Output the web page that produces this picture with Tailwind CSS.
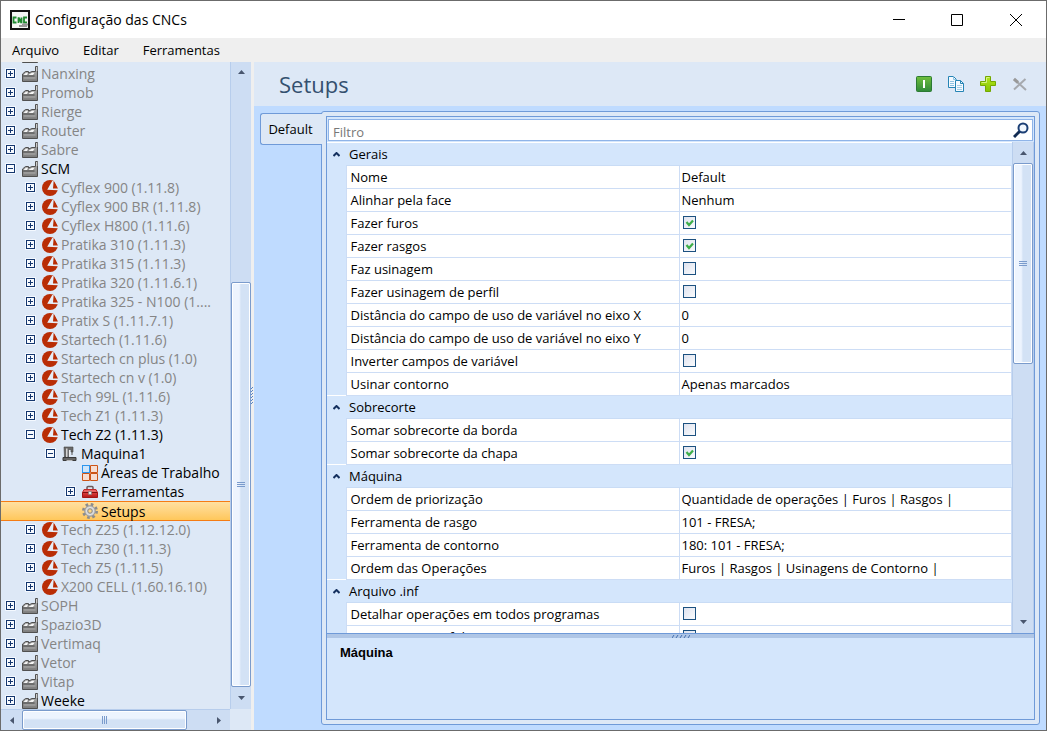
<!DOCTYPE html>
<html lang="pt-BR">
<head>
<meta charset="utf-8">
<title>Configuração das CNCs</title>
<script src="https://cdn.jsdelivr.net/npm/@tailwindcss/browser@4"></script>
</head>
<body class="font-['Open_Sans','Noto_Sans',sans-serif] text-black">
<svg class="absolute size-0" aria-hidden="true">
  <defs>
    <linearGradient id="metal" x2="0" y2="1"><stop stop-color="#b5b5b5"/><stop offset="1" stop-color="#7c7c7c"/></linearGradient>
    <linearGradient id="green" x2="0" y2="1"><stop stop-color="#6fbf3c"/><stop offset="1" stop-color="#2f8a3a"/></linearGradient>
    <linearGradient id="lime" x2="0" y2="1"><stop stop-color="#b5e61d"/><stop offset="1" stop-color="#84c400"/></linearGradient>
    <linearGradient id="red" x2="0" y2="1"><stop stop-color="#e04040"/><stop offset="1" stop-color="#b01818"/></linearGradient>
  </defs>
  <symbol id="plus" viewBox="0 0 11 11"><rect width="11" height="11" rx="1" fill="#f4f9ff"/><rect x="1.5" y="1.5" width="8" height="8" fill="#f8fbff" stroke="#14366e"/><path d="M3 5.5h5M5.500 3v5" stroke="#14366e"/></symbol>
  <symbol id="minus" viewBox="0 0 11 11"><rect width="11" height="11" rx="1" fill="#f4f9ff"/><rect x="1.5" y="1.5" width="8" height="8" fill="#f8fbff" stroke="#14366e"/><path d="M3 5.500h5" stroke="#14366e"/></symbol>
  <symbol id="factory" viewBox="0 0 16 16"><path d="M.5 15.500V8l3-2.500h3V7l3.500-1.500h3.500V.5h2v15z" fill="url(#metal)" stroke="#505050"/><path d="M2 8.500L4 6.800h2L5 9H2zM7 8.500l3-1.700h2.500L11 9H7z" fill="#f6f6f6"/><path d="M1 10h11.500" stroke="#4a4a4a"/><path d="M14 2h1.500M14 4h1.500" stroke="#eee"/><path d="M2 12h11.500" stroke="#aaa"/></symbol>
  <symbol id="scm" viewBox="0 0 16 16"><circle cx="8" cy="8" r="8" fill="#b92d05"/><path d="M10.200 1L5.200 9.800l10.800.4V8.500h-5L11.700.5z" fill="#e6edf7"/><path d="M11.700 0l.3 1 4 7.500V0z" fill="#dde8f6"/><path d="M12.300 2.500L15.200 8H11.800z" fill="#b92d05"/></symbol>
  <symbol id="machine" viewBox="0 0 16 16"><path d="M2 1h9v5H9V3.500H6.500V11H2.500z" fill="#6a6a6a" stroke="#444" stroke-width=".6"/><path d="M4 2.500h1.500V11H4z" fill="#d5d5d5"/><path d="M10 5v4" stroke="#555"/><path d="M7 4h1v6H7z" fill="#eee"/><path d="M1 14.500v-3h13v3z" fill="#666" stroke="#3a3a3a"/><path d="M4.500 14.500h6" stroke="#bbb"/></symbol>
  <symbol id="areas" viewBox="0 0 16 16"><rect width="16" height="16" fill="#fff"/><rect x=".5" y=".5" width="7" height="7" fill="#cfe6fb" stroke="#2c96ee"/><path d="M8.500.5h7v7h-7zM.5 8.500h7v7h-7zM8.500 8.500h7v7h-7z" fill="#f6ded3" stroke="#cc5416"/></symbol>
  <symbol id="toolbox" viewBox="0 0 16 16"><path d="M5 5V3.500q0-1 1-1h4q1 0 1 1V5" fill="none" stroke="#6b5a5a" stroke-width="1.500"/><path d="M2 5.500h12l1.500 3H.5z" fill="#ea6565" stroke="#c02a2a"/><path d="M.5 8.500h15v5h-15z" fill="url(#red)" stroke="#a31515"/><path d="M1 8.500h14" stroke="#7c1010"/><path d="M6.500 7.500h3v3h-3z" fill="#e8e8e8" stroke="#777" stroke-width=".6"/></symbol>
  <symbol id="gear" viewBox="0 0 16 16"><circle cx="8" cy="8" r="6.500" fill="none" stroke="#8c8c8c" stroke-width="3" stroke-dasharray="2.550 2.550"/><circle cx="8" cy="8" r="5.300" fill="#c9c9c9" stroke="#9a9a9a"/><circle cx="8" cy="8" r="3.600" fill="none" stroke="#e4e4e4"/><circle cx="8" cy="8" r="2.200" fill="#ffd883" stroke="#8c8c8c"/></symbol>
</svg>

<div class="flex flex-col h-screen border border-[#6b6b6b] overflow-hidden bg-white">
  <header class="flex items-center h-[37px] shrink-0 pl-[9px]">
    <svg class="size-5 mr-[5px]" viewBox="0 0 20 20"><path d="M1 1h18v18H1z" fill="#f4f6f4" stroke="#111" stroke-width="2"/><path d="M6.500 7.500h-3v5h3M8.500 13V7.500l3 5.500V7.500M17 7.500h-3v5h3" fill="none" stroke="#208a30" stroke-width="1.800"/><path d="M9 16h8M12 14.500h6" stroke="#999" stroke-width="2"/></svg>
    <h1 class="text-[14px] grow">Configuração das CNCs</h1>
    <button aria-label="Minimizar" class="w-[58px] h-full grid place-items-center"><svg class="size-3" viewBox="0 0 12 12"><path d="M0 5.500h12" stroke="#000"/></svg></button>
    <button aria-label="Maximizar" class="w-[58px] h-full grid place-items-center"><svg class="size-3" viewBox="0 0 12 12"><path d="M.5.5h11v11H.5z" fill="none" stroke="#000"/></svg></button>
    <button aria-label="Fechar" class="w-[60px] h-full grid place-items-center"><svg class="size-3" viewBox="0 0 12 12"><path d="M0 0l12 12M12 0L0 12" stroke="#000"/></svg></button>
  </header>
  <nav class="flex items-center h-6 shrink-0 bg-[#efefef] text-[13px] gap-6 pl-[11px] pt-px">
    <button>Arquivo</button><button>Editar</button><button>Ferramentas</button>
  </nav>

  <div class="flex grow min-h-0 bg-[#efefef]">
    <aside class="grid grid-cols-[1fr_21px] grid-rows-[1fr_21px] w-[250px] shrink-0 bg-[#dde8f6]">
      <ul id="tree" role="tree" class="min-h-0 min-w-0 overflow-hidden text-[14px] leading-[19px]"></ul>
      <div class="flex flex-col bg-[#cdddf3] border-l border-[#b7cdec]">
        <button aria-label="Rolar para cima" class="h-5 grid place-items-center"><svg class="w-[7px] h-1" viewBox="0 0 7 4"><path d="M3.500 0L7 4H0z" fill="#49566e"/></svg></button>
        <div class="flex-[201]"></div>
        <div class="flex-[404] grid place-items-center border border-[#7a9bcc] rounded-[2px] bg-linear-to-r from-[#edf4fe] from-40% to-[#d3e2f5] to-50% ring-1 ring-inset ring-white"><svg class="w-2 h-[6px]" viewBox="0 0 8 6"><path d="M0 .5h8M0 2.500h8M0 4.500h8" stroke="#7a9bcc"/></svg></div>
        <button aria-label="Rolar para baixo" class="h-[22px] grid place-items-center"><svg class="w-[7px] h-1" viewBox="0 0 7 4"><path d="M0 0h7L3.500 4z" fill="#49566e"/></svg></button>
      </div>
      <div class="flex bg-[#cdddf3] border-t border-[#b7cdec]">
        <button aria-label="Rolar para a esquerda" class="w-[21px] grid place-items-center"><svg class="w-1 h-[7px]" viewBox="0 0 4 7"><path d="M0 3.500L4 0v7z" fill="#49566e"/></svg></button>
        <div class="flex-[165] grid place-items-center border border-[#7a9bcc] rounded-[2px] bg-linear-to-b from-[#edf4fe] from-40% to-[#d3e2f5] to-50% ring-1 ring-inset ring-white"><svg class="w-[6px] h-2" viewBox="0 0 6 8"><path d="M.5 0v8M2.500 0v8M4.500 0v8" stroke="#7a9bcc"/></svg></div>
        <div class="flex-[21]"></div>
        <button aria-label="Rolar para a direita" class="w-[22px] grid place-items-center"><svg class="w-1 h-[7px]" viewBox="0 0 4 7"><path d="M0 0L4 3.500 0 7z" fill="#49566e"/></svg></button>
      </div>
      <div></div>
    </aside>
    <div class="w-[3px] shrink-0 grid place-items-center"><svg class="w-[3px] h-[18px]" viewBox="0 0 3 18"><path d="M0 2l2-2M0 5l2-2M0 8l2-2M0 11l2-2M0 14l2-2M0 17l2-2" stroke="#5a86c5"/></svg></div>

    <main class="flex flex-col grow min-w-0 bg-[#bfdbff]">
      <div class="flex items-center h-11 shrink-0 bg-[#dde8f6] pl-[25px] pr-[18px] gap-4">
        <h2 class="text-[22px] text-[#34506f] grow">Setups</h2>
        <button aria-label="Ativar"><svg class="block size-4" viewBox="0 0 16 16"><rect x=".5" y=".5" width="15" height="15" rx="1" fill="url(#green)" stroke="#2c7a34"/><path d="M8 4v8" stroke="#fff" stroke-width="2"/></svg></button>
        <button aria-label="Copiar"><svg class="block size-4" viewBox="0 0 16 16"><path d="M.5.5h5l3 3v8h-8z" fill="#f4faff" stroke="#2684b5"/><path d="M5.500.5v3h3M2 5.500h4M2 7.500h4M2 9.500h4" fill="none" stroke="#8ec3e2"/><path d="M7.500 4.500h5l3 3v8h-8z" fill="#f4faff" stroke="#2684b5"/><path d="M12.500 4.500v3h3" fill="none" stroke="#2684b5"/><path d="M9 9.500h5M9 11.500h5M9 13.500h5" stroke="#a5cfe8"/></svg></button>
        <button aria-label="Adicionar"><svg class="block size-4" viewBox="0 0 16 16"><path d="M5.500.5h5v5h5v4h-5v6h-5v-6h-5v-4h5z" fill="url(#lime)" stroke="#74a800"/><path d="M6.500 6.500v-5h3M1.500 6.500h5" fill="none" stroke="#d6f384"/></svg></button>
        <button aria-label="Excluir" disabled><svg class="block size-4" viewBox="0 0 16 16"><path d="M2 3l12 11M13.500 3L2 13.500" stroke="#a6a9ae" stroke-width="2"/><path d="M2 3l4 3.500" stroke="#999" stroke-width="3"/></svg></button>
      </div>

      <div class="flex grow min-h-0 pt-[5px] pb-[5px] pl-1.5 pr-1.5">
        <div class="w-[62px] shrink-0 pt-0.5 z-10 -mr-px" role="tablist">
          <button role="tab" aria-selected="true" class="w-full h-8 pt-px pr-0.5 text-[13px] bg-[#dde8f6] border border-r-0 border-[#6f9ad8] rounded-l-[3px]">Default</button>
        </div>
        <section class="grow min-w-0 flex p-1 bg-[#dde8f6] border border-[#6f9ad8] rounded-[3px]">
          <div class="grow min-w-0 flex flex-col border border-[#6f9ad8] bg-[#d4e6fc]">
            <div class="p-px pt-0.5 shrink-0">
              <label class="flex items-center h-[22px] bg-white border border-[#8fb4e8] pl-1 pr-[3px]">
                <input type="text" placeholder="Filtro" aria-label="Filtro" class="grow min-w-0 pt-1 text-[13px] leading-4 outline-none placeholder:text-[#777]">
                <svg class="size-4" viewBox="0 0 16 16"><circle cx="10" cy="6" r="4.500" fill="#f2f8ff" stroke="#1c3f75" stroke-width="2"/><path d="M6.500 9.500L1 15" stroke="#122b52" stroke-width="3"/></svg>
              </label>
            </div>
            <div class="flex grow min-h-0">
              <div class="grow min-w-0 overflow-hidden">
                <table class="w-full table-fixed border-collapse text-[13px] leading-4">
                  <colgroup><col class="w-[19px]"><col class="w-[333px]"><col></colgroup>
                  <tbody id="props"></tbody>
                </table>
              </div>
              <div class="flex flex-col w-[22px] shrink-0 bg-[#cdddf3] border-x border-[#b7cdec]">
                <button aria-label="Rolar propriedades para cima" class="h-[21px] grid place-items-center"><svg class="w-[7px] h-1" viewBox="0 0 7 4"><path d="M3.500 0L7 4H0z" fill="#49566e"/></svg></button>
                <div class="flex-[200] grid place-items-center border border-[#7a9bcc] rounded-[2px] bg-linear-to-r from-[#edf4fe] from-40% to-[#d3e2f5] to-50% ring-1 ring-inset ring-white"><svg class="w-2 h-[6px]" viewBox="0 0 8 6"><path d="M0 .5h8M0 2.500h8M0 4.500h8" stroke="#7a9bcc"/></svg></div>
                <div class="flex-[248]"></div>
                <button aria-label="Rolar propriedades para baixo" class="h-[22px] grid place-items-center"><svg class="w-[7px] h-1" viewBox="0 0 7 4"><path d="M0 0h7L3.500 4z" fill="#49566e"/></svg></button>
              </div>
            </div>
            <div class="h-[5px] shrink-0 border-t border-[#6f9ad8] bg-[#afc6e6] grid place-items-center"><svg class="w-[18px] h-[3px]" viewBox="0 0 18 3"><path d="M0 3l2-3M4 3l2-3M8 3l2-3M12 3l2-3M16 3l2-3" stroke="#426fae"/></svg></div>
            <div class="h-[81px] shrink-0 px-[13px] py-[7px]"><h3 class="font-['Liberation_Sans',sans-serif] font-bold text-[13px] leading-4">Máquina</h3></div>
          </div>
        </section>
      </div>
    </main>
  </div>
</div>

<script>
const icon = (id, cls) => `<svg class="${cls}" aria-hidden="true"><use href="#${id}"/></svg>`;

// [depth, expander, icon, label, state]; state 0 is disabled, 1 enabled, 2 selected
const nodes = [
  [0,'','factory','',0],[0,'plus','factory','Nanxing',0],[0,'plus','factory','Promob',0],[0,'plus','factory','Rierge',0],
  [0,'plus','factory','Router',0],[0,'plus','factory','Sabre',0],[0,'minus','factory','SCM',1],
  [1,'plus','scm','Cyflex 900 (1.11.8)',0],[1,'plus','scm','Cyflex 900 BR (1.11.8)',0],[1,'plus','scm','Cyflex H800 (1.11.6)',0],
  [1,'plus','scm','Pratika 310 (1.11.3)',0],[1,'plus','scm','Pratika 315 (1.11.3)',0],[1,'plus','scm','Pratika 320 (1.11.6.1)',0],
  [1,'plus','scm','Pratika 325 - N100 (1....',0],[1,'plus','scm','Pratix S (1.11.7.1)',0],[1,'plus','scm','Startech (1.11.6)',0],
  [1,'plus','scm','Startech cn plus (1.0)',0],[1,'plus','scm','Startech cn v (1.0)',0],[1,'plus','scm','Tech 99L (1.11.6)',0],
  [1,'plus','scm','Tech Z1 (1.11.3)',0],[1,'minus','scm','Tech Z2 (1.11.3)',1],[2,'minus','machine','Maquina1',1],
  [3,'','areas','Áreas de Trabalho',1],[3,'plus','toolbox','Ferramentas',1],[3,'','gear','Setups',2],
  [1,'plus','scm','Tech Z25 (1.12.12.0)',0],[1,'plus','scm','Tech Z30 (1.11.3)',0],[1,'plus','scm','Tech Z5 (1.11.5)',0],
  [1,'plus','scm','X200 CELL (1.60.16.10)',0],[0,'plus','factory','SOPH',0],[0,'plus','factory','Spazio3D',0],
  [0,'plus','factory','Vertimaq',0],[0,'plus','factory','Vetor',0],[0,'plus','factory','Vitap',0],[0,'plus','factory','Weeke',1]
];
const indent = ['pl-1','pl-6','pl-11','pl-16'];
const tone = ['text-[#858585]', 'text-black', 'text-black bg-linear-to-b from-[#ffe0a0] to-[#ffc75a] border-y border-[#f57c14]'];
document.getElementById('tree').innerHTML = nodes.map(([d, e, i, label, state], n) =>
  `<li role="treeitem" aria-level="${d + 1}" class="flex items-center ${state === 2 ? 'h-5 -mb-px' : 'h-[19px]'} whitespace-nowrap ${n ? '' : '-mt-[17px]'} ${indent[d]} ${tone[state]}">
    <span class="w-[17px] shrink-0">${e ? icon(e, 'size-[11px]') : ''}</span>${icon(i, 'size-4 shrink-0 mr-[3px]')}<span>${label}</span></li>`).join('');

// A string is a category heading; a pair is a property and its value.
const props = ['Gerais',
  ['Nome','Default'],['Alinhar pela face','Nenhum'],['Fazer furos',true],['Fazer rasgos',true],['Faz usinagem',false],
  ['Fazer usinagem de perfil',false],['Distância do campo de uso de variável no eixo X','0'],
  ['Distância do campo de uso de variável no eixo Y','0'],['Inverter campos de variável',false],['Usinar contorno','Apenas marcados'],
  'Sobrecorte',['Somar sobrecorte da borda',false],['Somar sobrecorte da chapa',true],
  'Máquina',['Ordem de priorização','Quantidade de operações | Furos | Rasgos |'],['Ferramenta de rasgo','101 - FRESA;'],
  ['Ferramenta de contorno','180: 101 - FRESA;'],['Ordem das Operações','Furos | Rasgos | Usinagens de Contorno |'],
  'Arquivo .inf',['Detalhar operações em todos programas',false],['Gerar arquivo inf de peça sem operação',false]];
const value = (v, id) => typeof v === 'string' ? v :
  `<span class="relative block size-[13px] ml-px -mt-px"><input id="${id}" type="checkbox" ${v ? 'checked' : ''} class="peer block appearance-none size-[13px] border border-[#1c5180] bg-linear-to-br from-[#dfe3ee] to-[#fafbfd]"><svg class="absolute inset-0 size-[13px] hidden peer-checked:block pointer-events-none" viewBox="0 0 13 13"><path d="M3.500 6l2.500 3 4-4.500" fill="none" stroke="#3fae49" stroke-width="2.200"/></svg></span>`;
document.getElementById('props').innerHTML = props.map((p, n) => typeof p === 'string'
  ? `<tr class="h-[23px] bg-[#d4e6fc]"><td class="p-0 pl-1.5 border-t border-white"><button aria-label="Recolher ${p}" class="block"><svg class="w-[7px] h-[5px]" viewBox="0 0 7 5"><path d="M.5 4l3-3 3 3" fill="none" stroke="#14305f" stroke-width="2"/></svg></button></td><th colspan="2" class="p-0 pl-[3px] text-left font-normal border-y border-t-white border-b-[#c9dcf5]">${p}</th></tr>`
  : `<tr class="h-[23px]"><td class="p-0 bg-[#d4e6fc]"></td><th class="p-0 pl-1 text-left font-normal bg-white border border-[#cdddf5]">${typeof p[1] === 'boolean' ? `<label for="prop${n}">${p[0]}</label>` : p[0]}</th><td class="p-0 pl-0.5 bg-white border border-[#cdddf5]">${value(p[1], 'prop' + n)}</td></tr>`).join('');
</script>
</body>
</html>
